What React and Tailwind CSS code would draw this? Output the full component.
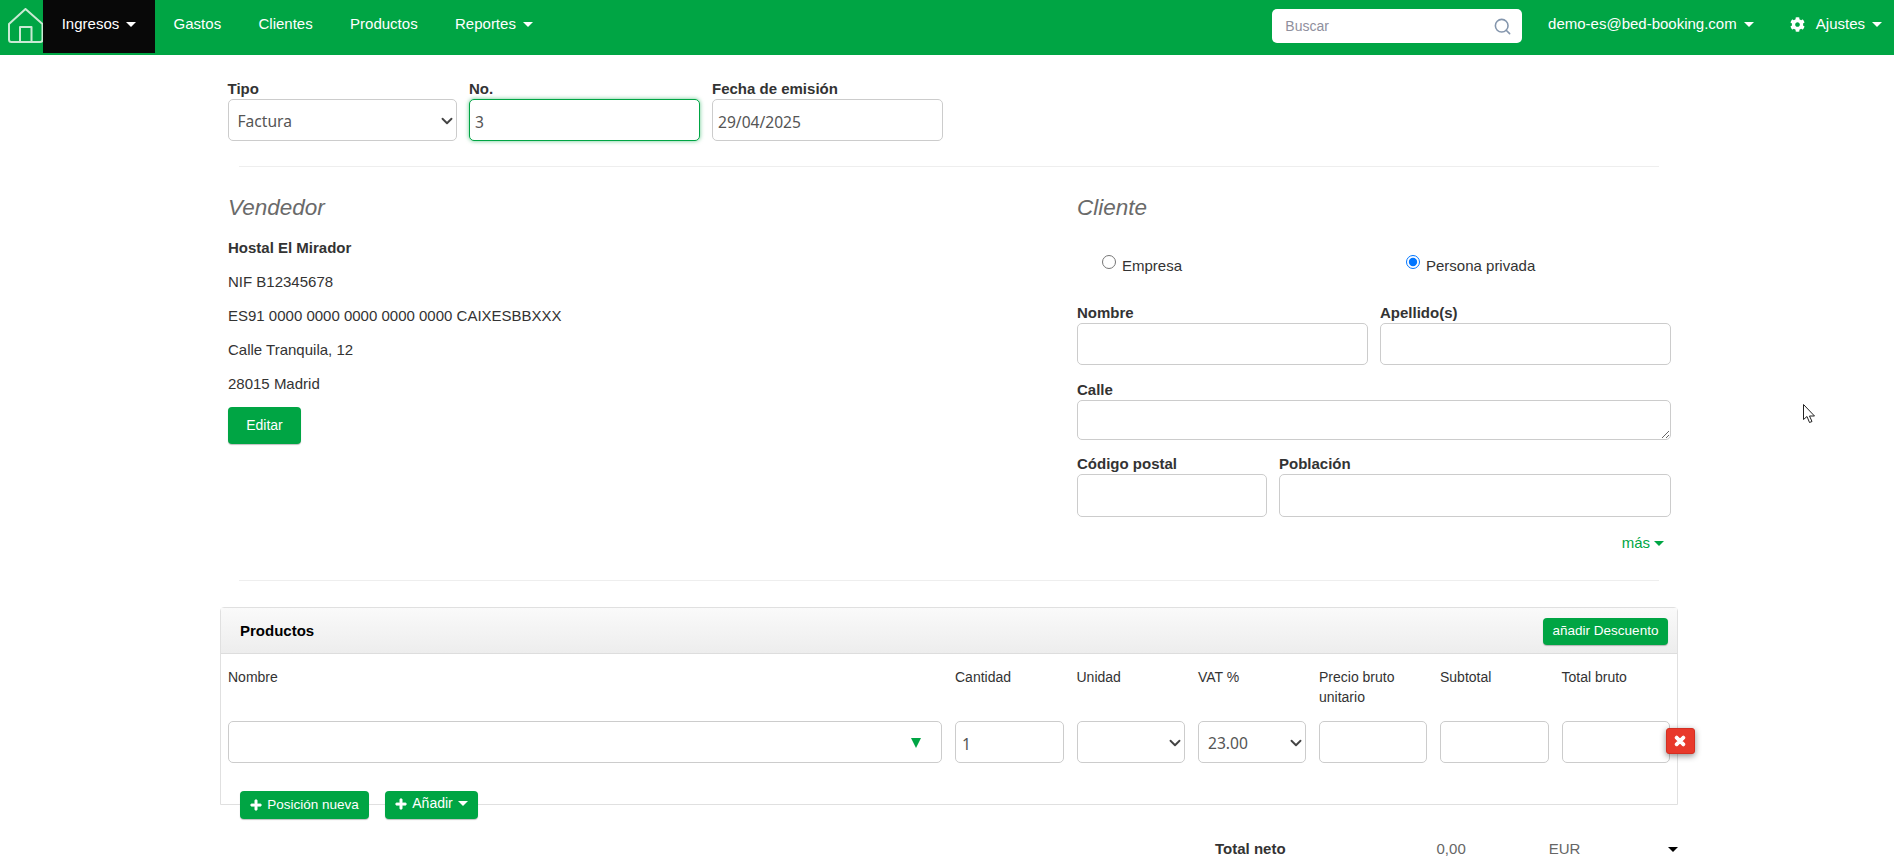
import React from 'react';
import { Search, ChevronDown } from 'lucide-react';
import { FaCog, FaPlus, FaTimes } from 'react-icons/fa';

const inputFont = "[font-family:'Noto_Sans',sans-serif] text-[15.6px] text-[#555] pt-[3px]";
const fieldBase = 'block w-full bg-white border rounded-[5px] outline-none';
const fieldClass = `${fieldBase} border-[#ccc]`;

const Caret = ({ className = 'border-t-white' }) => (
    <span className={`inline-block w-0 h-0 border-x-[5px] border-x-transparent border-t-[5px] ${className}`} />
);

const NavItem = ({ label, caret, active }) => (
    <a className={`flex items-center gap-[7px] h-[53px] px-[18.7px] text-white text-[15px] pb-[5px] ${active ? 'bg-[#080808]' : ''}`}>
        {label}
        {caret && <Caret />}
    </a>
);

const HomeIcon = () => (
    <svg viewBox="0 0 36 36" className="w-[36px] h-[36px] ml-[7.5px] mt-[7.5px]" fill="none" stroke="#c9ead3" strokeWidth="2" strokeLinejoin="round">
        <path d="M1 16 L17.5 1 L34.5 16 V31.5 Q34.5 34 32 34 H3.5 Q1 34 1 31.5 Z" />
        <path d="M12 34 V19 H23.5 V34" />
    </svg>
);

const Navbar = () => (
    <nav className="flex h-[55px] bg-[#00a544]">
        <HomeIcon />
        <div className="flex ml-[-0.5px]">
            <NavItem label="Ingresos" caret active />
            <NavItem label="Gastos" />
            <NavItem label="Clientes" />
            <NavItem label="Productos" />
            <NavItem label="Reportes" caret />
        </div>
        <div className="flex items-start ml-auto">
            <div className="flex items-center justify-between w-[250px] h-[34px] mt-[9px] pl-[13px] pr-[10px] bg-white rounded-[5px]">
                <span className="text-[14px] text-[#8f8f9d]">Buscar</span>
                <Search size={19} strokeWidth={2} className="text-[#8496ad]" />
            </div>
            <div className="flex ml-[7px]">
                <NavItem label="demo-es@bed-booking.com" caret />
                <a className="flex items-center h-[53px] pl-[17.4px] pr-[12px] pb-[5px] text-white text-[15px]">
                    <FaCog size={15} className="mr-[11px]" />
                    Ajustes
                    <Caret className="border-t-white ml-[7px]" />
                </a>
            </div>
        </div>
    </nav>
);

const Field = ({ label, h = 'h-[42px]', children }) => (
    <div>
        <label className="block h-[20px] leading-[20px] font-bold text-[15px]">{label}</label>
        {children || <input className={`${fieldClass} ${h}`} />}
    </div>
);

const SelectBox = ({ value, pad = 'pl-[9px]' }) => (
    <div className="relative">
        <select defaultValue={value} className={`${fieldClass} ${inputFont} ${pad} h-[42px] appearance-none`}>
            <option value={value}>{value}</option>
        </select>
        <ChevronDown size={18} strokeWidth={2.5} className="absolute right-[1px] top-[13px] text-[#444] pointer-events-none" />
    </div>
);

const Divider = () => <hr className="mx-[19px] border-0 border-t border-[#eeeeee]" />;

const TopRow = () => (
    <div className="grid grid-cols-[229.5px_231px_231px] gap-x-[12px] ml-[7.5px] pt-[24px]">
        <Field label="Tipo"><SelectBox value="Factura" /></Field>
        <Field label="No.">
            <input defaultValue="3" className={`${fieldBase} ${inputFont} h-[42px] pl-[5px] border-[#00a544] shadow-[0_0_4px_rgba(0,165,68,0.6)]`} />
        </Field>
        <Field label="Fecha de emisión">
            <input defaultValue="29/04/2025" className={`${fieldClass} ${inputFont} h-[42px] pl-[5px]`} />
        </Field>
    </div>
);

const Seller = () => (
    <div className="w-[857px] pl-[8px]">
        <h2 className="h-[30px] mt-[2px] leading-[30px] text-[22.5px] italic text-[#6a6a6a]">Vendedor</h2>
        <div className="flex flex-col gap-[14px] mt-[15px] leading-[20px] text-[15px]">
            <p className="font-bold">Hostal El Mirador</p>
            <p>NIF B12345678</p>
            <p>ES91 0000 0000 0000 0000 0000 CAIXESBBXXX</p>
            <p>Calle Tranquila, 12</p>
            <p>28015 Madrid</p>
        </div>
        <button className="block w-[73px] h-[37px] mt-[13px] bg-[#00a544] rounded-[4px] text-white text-[14px] shadow-[0_1px_1px_rgba(0,0,0,0.25)]">Editar</button>
    </div>
);

const Radio = ({ label, checked, className = '' }) => (
    <label className={`flex items-start gap-[6px] h-[20px] ${className}`}>
        <input type="radio" name="tipoCliente" defaultChecked={checked} className="w-[14px] h-[14px] m-0 mt-[-1px] accent-[#0075ff]" />
        <span className="leading-[20px] text-[15px]">{label}</span>
    </label>
);

const Client = () => (
    <div className="w-[594px]">
        <h2 className="h-[30px] mt-[2px] leading-[30px] text-[22.5px] italic text-[#6a6a6a]">Cliente</h2>
        <div className="flex mt-[33px] pl-[25px]">
            <Radio label="Empresa" className="w-[304px]" />
            <Radio label="Persona privada" checked />
        </div>
        <div className="grid grid-cols-2 gap-x-[12px] mt-[27px]">
            <Field label="Nombre" />
            <Field label="Apellido(s)" />
        </div>
        <div className="mt-[15px]">
            <Field label="Calle">
                <textarea className={`${fieldClass} h-[40px] resize-y`} />
            </Field>
        </div>
        <div className="grid grid-cols-[190px_1fr] gap-x-[12px] mt-[14px]">
            <Field label="Código postal" h="h-[43px]" />
            <Field label="Población" h="h-[43px]" />
        </div>
        <div className="flex items-center justify-end gap-[4px] h-[20px] mt-[16px] pr-[7px] text-[15px] text-[#00a544]">
            más <Caret className="border-t-[#00a544]" />
        </div>
    </div>
);

const columns = ['Nombre', 'Cantidad', 'Unidad', 'VAT %', 'Precio bruto unitario', 'Subtotal', 'Total bruto'];

const GreenButton = ({ children, className = '' }) => (
    <button className={`flex items-center justify-center bg-[#00a544] rounded-[4px] text-white text-[13.5px] shadow-[0_1px_1px_rgba(0,0,0,0.25)] ${className}`}>
        {children}
    </button>
);

const Products = () => (
    <section className="border border-[#e0e0e0] rounded-t-[4px]">
        <header className="flex items-center justify-between h-[46px] pt-[2px] pl-[19px] pr-[9px] bg-gradient-to-b from-[#fafafa] to-[#ededed] border-b border-[#dddddd]">
            <h3 className="font-bold text-[15px] text-black">Productos</h3>
            <GreenButton className="w-[125px] h-[27px] text-[13.3px]">añadir Descuento</GreenButton>
        </header>
        <div className="pl-[7px] pt-[13px]">
            <div className="grid grid-cols-[714px_108.5px_108.5px_108px_108px_108.5px_108px] gap-x-[13px]">
                {columns.map((name) => (
                    <div key={name} className="h-[40px] leading-[20px] text-[14px]">{name}</div>
                ))}
                <div className="relative mt-[14px]">
                    <input className={`${fieldClass} h-[42px]`} />
                    <span className="absolute right-[21px] top-[17px] w-0 h-0 border-x-[5px] border-x-transparent border-t-[10px] border-t-[#00a544]" />
                </div>
                <div className="mt-[14px]">
                    <input defaultValue="1" className={`${fieldClass} ${inputFont} h-[42px] pl-[6px]`} />
                </div>
                <div className="mt-[14px]"><SelectBox value="" /></div>
                <div className="mt-[14px]"><SelectBox value="23.00" /></div>
                <div className="mt-[14px]"><input className={`${fieldClass} h-[42px]`} /></div>
                <div className="mt-[14px]"><input className={`${fieldClass} h-[42px]`} /></div>
                <div className="relative mt-[14px]">
                    <input className={`${fieldClass} h-[42px]`} />
                    <button className="absolute right-[-25px] top-[7px] flex items-center justify-center w-[29px] h-[26px] bg-[#e8392b] border border-[#d32f22] rounded-[3px] text-white shadow-[0_2px_6px_rgba(0,0,0,0.45)]">
                        <FaTimes size={14} stroke="currentColor" strokeWidth={40} />
                    </button>
                </div>
            </div>
            <div className="flex gap-[16px] ml-[12px] mt-[28px] mb-[-15.5px]">
                <GreenButton className="gap-[5px] w-[129px] h-[28px]">
                    <FaPlus size={12} stroke="currentColor" strokeWidth={30} /> Posición nueva
                </GreenButton>
                <GreenButton className="gap-[5px] w-[93px] h-[28px] pb-[3px] text-[14px]">
                    <FaPlus size={12} stroke="currentColor" strokeWidth={30} /> Añadir <Caret />
                </GreenButton>
            </div>
        </div>
    </section>
);

const Totals = () => (
    <div className="flex items-center h-[20px] mt-[34.5px] pl-[995px] text-[15px]">
        <span className="w-[223px] font-bold">Total neto</span>
        <span className="w-[113px] text-[#666]">0,00</span>
        <span className="w-[120px] text-[#666]">EUR</span>
        <Caret className="border-t-black" />
    </div>
);

const App = () => {
    return (
        <div className="relative h-[861px] overflow-hidden bg-white text-[#333] [font-family:'Liberation_Sans',Arial,sans-serif]">
            <Navbar />
            <main className="w-[1458px] ml-[220px]">
                <TopRow />
                <div className="mt-[25px]"><Divider /></div>
                <div className="flex pt-[24px]">
                    <Seller />
                    <Client />
                </div>
                <div className="mt-[27px]"><Divider /></div>
                <div className="mt-[26px]"><Products /></div>
                <Totals />
            </main>
            {/* mouse pointer caught in the screenshot */}
            <svg viewBox="0 0 13 20" className="absolute left-[1803px] top-[404px] w-[13px] h-[20px]" fill="#fff" stroke="#222" strokeWidth="1">
                <path d="M0.5 0.5 V15.5 L4 12.5 L6.5 18.5 L9 17.5 L6.5 12 H11.5 Z" />
            </svg>
        </div>
    );
};

export default App;
